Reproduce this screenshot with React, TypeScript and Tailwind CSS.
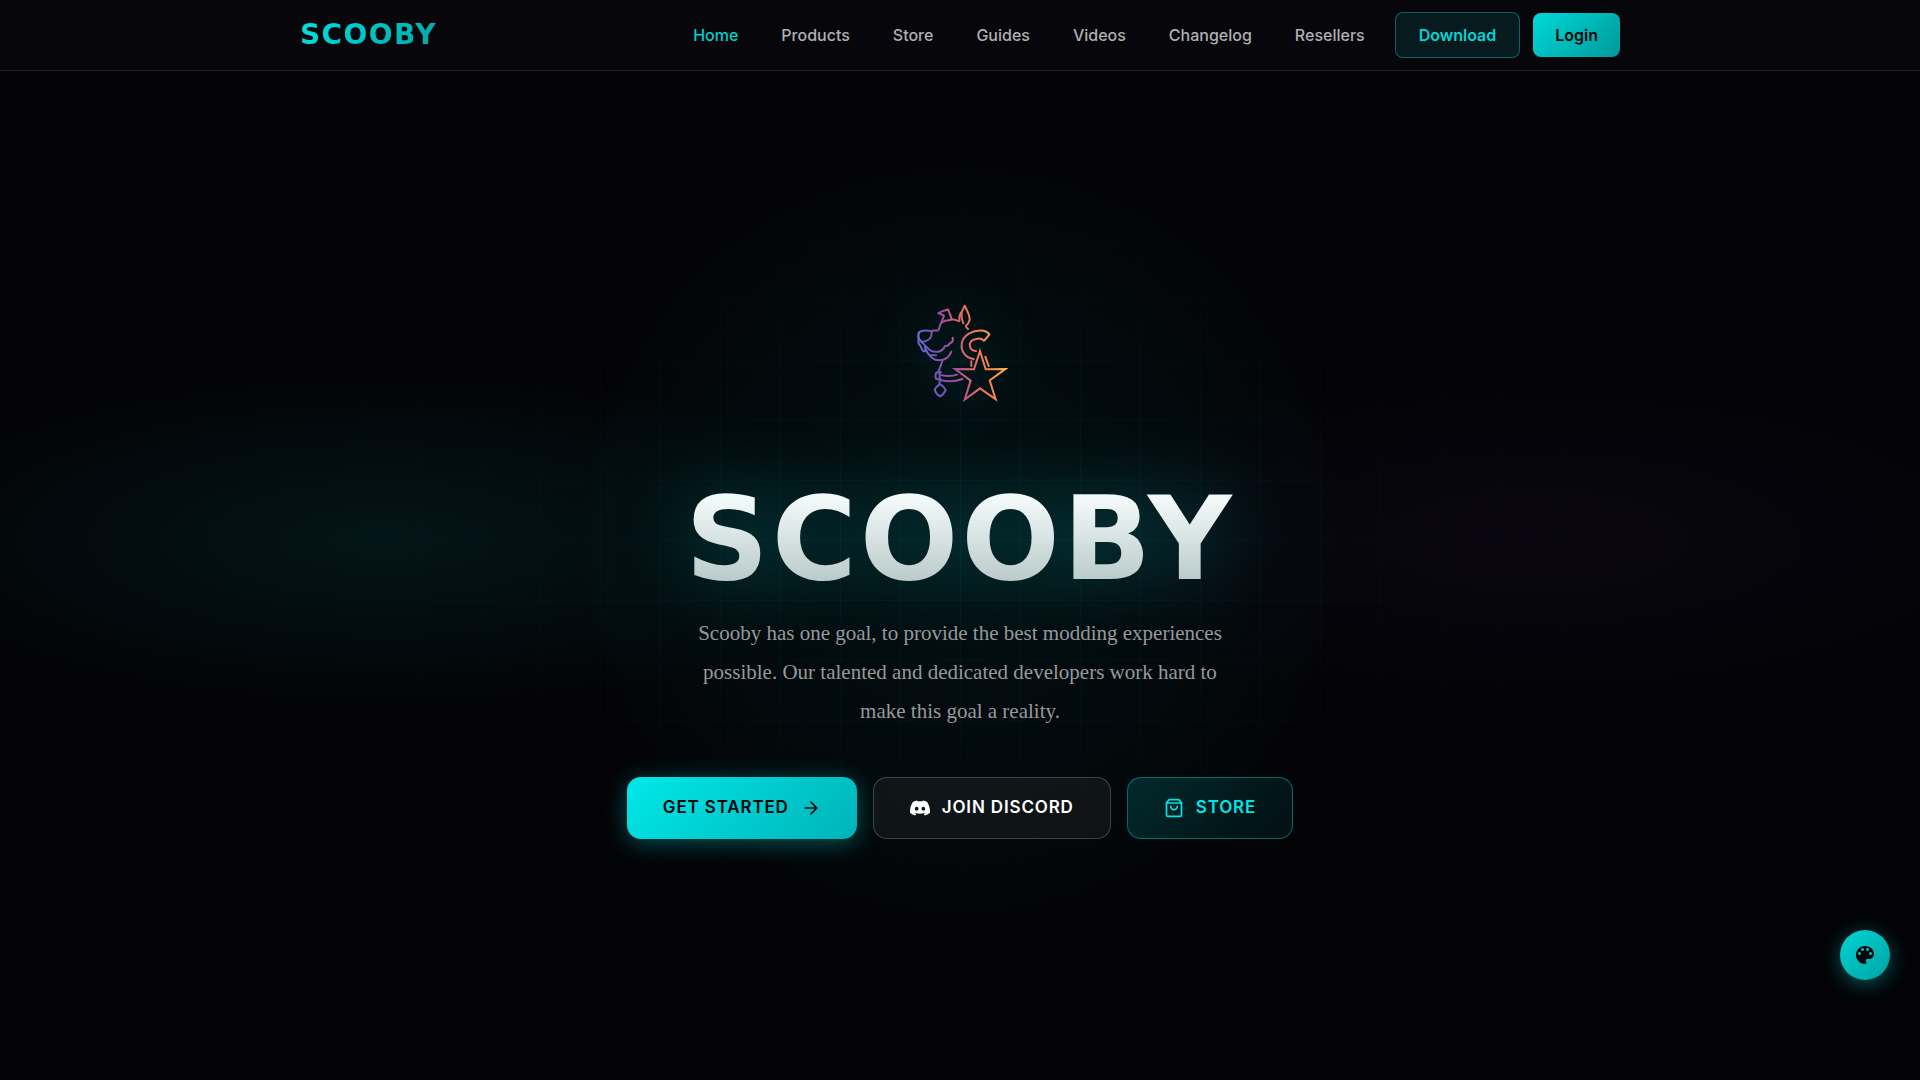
import { SiDiscord } from "react-icons/si";
import { ArrowRight } from "lucide-react";

const links = [
  "Home",
  "Products",
  "Store",
  "Guides",
  "Videos",
  "Changelog",
  "Resellers",
];

function Header() {
  return (
    <header className="relative z-10 border-b border-white/10 bg-[#06060b]">
      <div className="mx-auto flex h-[70px] max-w-[1320px] items-center justify-between">
        <a
          href="#home"
          className="bg-linear-135 from-[#00e5e5] to-[#00a3a3] bg-clip-text font-['DejaVu_Sans'] text-[28px] font-bold tracking-wider text-transparent"
        >
          SCOOBY
        </a>
        <div className="flex items-center gap-[30px]">
          <nav className="flex items-center gap-[43px]">
            {links.map((link) => (
              <a
                key={link}
                href={`#${link.toLowerCase()}`}
                className={
                  link === "Home"
                    ? "font-medium text-[#00cfcf]"
                    : "font-medium text-[#b0b0b2]"
                }
              >
                {link}
              </a>
            ))}
          </nav>
          <div className="flex items-center gap-[13px]">
            <a
              href="#download"
              className="flex h-[46px] items-center rounded-lg border border-[#00d4d4]/40 bg-[#071a1d] px-[23px] font-semibold text-[#00d4d4]"
            >
              Download
            </a>
            <a
              href="#login"
              className="flex h-11 items-center rounded-lg bg-linear-135 from-[#00d9d9] to-[#009999] px-[22px] font-semibold text-[#04060a]"
            >
              Login
            </a>
          </div>
        </div>
      </div>
    </header>
  );
}

function Background() {
  return (
    <div className="pointer-events-none absolute inset-0 overflow-hidden">
      <div className="absolute inset-0 bg-[radial-gradient(ellipse_520px_170px_at_20%_50%,rgba(0,229,229,0.08),transparent),radial-gradient(ellipse_520px_170px_at_80%_50%,rgba(120,60,180,0.06),transparent)]"></div>
      <div className="absolute inset-0 bg-[radial-gradient(circle_380px_at_50%_50%,rgba(0,229,229,0.055),rgba(0,229,229,0.01)_95%,transparent)]"></div>
      <div className="absolute inset-0 bg-[linear-gradient(rgba(0,229,229,0.05)_1px,transparent_1px),linear-gradient(90deg,rgba(0,229,229,0.05)_1px,transparent_1px)] mask-[radial-gradient(ellipse_800px_450px_at_50%_50%,black,transparent)] bg-size-[60px_60px]"></div>
    </div>
  );
}

function DogLogo() {
  return (
    <svg
      viewBox="0 0 360 360"
      className="size-[120px] drop-shadow-[0_0_30px_rgba(0,229,229,0.35)]"
      fill="none"
      stroke="url(#dog)"
      strokeWidth="6"
      strokeLinecap="round"
      strokeLinejoin="round"
    >
      <defs>
        <linearGradient
          id="dog"
          gradientUnits="userSpaceOnUse"
          x1="50"
          y1="200"
          x2="307"
          y2="140"
        >
          <stop offset="0" stopColor="#5a72c8" />
          <stop offset="0.2" stopColor="#7455b8" />
          <stop offset="0.38" stopColor="#a24d9b" />
          <stop offset="0.52" stopColor="#d6607a" />
          <stop offset="0.64" stopColor="#ea6e60" />
          <stop offset="0.78" stopColor="#f4884c" />
          <stop offset="1" stopColor="#ffc23c" />
        </linearGradient>
      </defs>
      <path d="M57 127c7-7 26-6 37-4 4 12-4 26-14 29-8 4-15 3-18 1-6-7-9-18-5-26z" />
      <path d="M57 127c-3 13-2 25-1 34 7 5 7 14 12 20 4 3 7 4 10 2M62 153l13 13c0 8 1 14 5 18M94 123c8-3 15 0 21-2 5-8 3-17 9-23 7-4 15-7 22-7 12-5 21-2 28 2" />
      <path d="M124 97l8-20-17-8c9-5 19-7 29-11 4 9 8 18 11 30" />
      <path d="M178 93c-1-11 1-22 8-29-3 13-1 25 4 36M186 64l8-17c8 15 16 31 15 42-2 8-6 14-11 18-2 2 1 5 6 10" />
      <path d="M158 143c2 12-3 16-9 17-2 9-10 8-14 8-4 9-12 16-21 17-16 2-27-4-34-15" />
      <path d="M76 174c3 11 9 19 15 22l17 0M80 184c7 15 22 27 37 27 17 0 31-10 37-26M128 210l-13 37" />
      <path d="M123 247c-6 0-13-1-15 2-3 7-2 12 0 17 4 3 9 2 14 2M119 249v33M125 256c18 3 32 3 46-2M123 271c23 5 43 4 64-4" />
      <path d="M119 283c5 1 14 11 18 17-4 8-10 17-17 19-7-4-13-10-16-20 3-6 9-12 15-16z" />
      <path d="M221 207c-28-5-38-26-36-43 2-31 37-46 66-42 9 2 14 5 17 12-6 7-10 13-16 18-6-5-14-8-23-5-16 2-22 12-19 23 2 8 9 12 18 13" />
      <path d="M214 214v14M256 200l10 28" />
      <path
        d="M240 183l17 55 59-1-47 34 18 57-47-33-46 34 18-57-47-35 57 1z"
        strokeLinejoin="miter"
      />
    </svg>
  );
}

function Hero() {
  return (
    <main className="relative flex flex-1 flex-col items-center text-center">
      <div className="mt-[219px]">
        <DogLogo />
      </div>
      <h1 className="mt-16 bg-linear-to-b from-[#f2f9f9] from-20% to-[#bccccc] to-80% bg-clip-text font-['DejaVu_Sans'] text-[116px] leading-[130px] font-bold tracking-wide text-transparent drop-shadow-[0_0_40px_rgba(0,229,229,0.3)]">
        SCOOBY
      </h1>
      <p className="mt-[10px] max-w-[560px] font-['Liberation_Serif'] text-[21px] leading-[39px] text-[#97999a]">
        Scooby has one goal, to provide the best modding experiences possible.
        Our talented and dedicated developers work hard to make this goal a
        reality.
      </p>
      <div className="mt-[46px] flex flex-wrap justify-center gap-4 text-[17px] font-semibold tracking-wider">
        <a
          href="#products"
          className="flex h-[62px] items-center gap-3 rounded-[14px] bg-linear-135 from-[#00e8e8] to-[#00b3b8] px-9 text-[#04080b] shadow-[0_4px_24px_rgba(0,229,229,0.35)]"
        >
          GET STARTED
          <ArrowRight className="size-5" />
        </a>
        <a
          href="#discord"
          className="flex h-[62px] items-center gap-3 rounded-[14px] border border-white/20 bg-white/5 px-9 text-white"
        >
          <SiDiscord className="size-5" />
          JOIN DISCORD
        </a>
        <a
          href="#store"
          className="flex h-[62px] items-center gap-3 rounded-[14px] border border-[#00e5e5]/40 bg-linear-135 from-[#00e5e5]/15 to-[#00e5e5]/6 px-9 text-[#00e5e5]"
        >
          <svg
            viewBox="0 0 24 24"
            className="size-5"
            fill="none"
            stroke="currentColor"
            strokeWidth="2"
            strokeLinecap="round"
            strokeLinejoin="round"
          >
            <path d="M6 2 3 6v14a2 2 0 0 0 2 2h14a2 2 0 0 0 2-2V6l-3-4z" />
            <path d="M3 6h18M16 10a4 4 0 0 1-8 0" />
          </svg>
          STORE
        </a>
      </div>
    </main>
  );
}

function App() {
  return (
    <div className="relative flex min-h-screen flex-col bg-[#030306] font-['Inter',sans-serif] text-base">
      <Background />
      <Header />
      <Hero />
      <button
        type="button"
        aria-label="Theme"
        className="fixed right-[30px] bottom-[100px] z-20 flex size-[50px] items-center justify-center rounded-full bg-linear-135 from-[#00d4d4] to-[#00a3a3] text-[#04080b] shadow-[0_4px_20px_rgba(0,212,212,0.4)]"
      >
        <svg viewBox="0 0 24 24" className="size-6" fill="currentColor">
          <path d="M12 3c-4.97 0-9 4.03-9 9s4.03 9 9 9c.83 0 1.5-.67 1.5-1.5 0-.39-.15-.74-.39-1.01-.23-.26-.38-.61-.38-.99 0-.83.67-1.5 1.5-1.5H16c2.76 0 5-2.24 5-5 0-4.42-4.03-8-9-8zm-5.5 9c-.83 0-1.5-.67-1.5-1.5S5.67 9 6.5 9 8 9.67 8 10.5 7.33 12 6.5 12zm3-4C8.67 8 8 7.33 8 6.5S8.67 5 9.5 5s1.5.67 1.5 1.5S10.33 8 9.5 8zm5 0c-.83 0-1.5-.67-1.5-1.5S13.67 5 14.5 5s1.5.67 1.5 1.5S15.33 8 14.5 8zm3 4c-.83 0-1.5-.67-1.5-1.5S16.67 9 17.5 9s1.5.67 1.5 1.5-.67 1.5-1.5 1.5z" />
        </svg>
      </button>
    </div>
  );
}

export default App;
